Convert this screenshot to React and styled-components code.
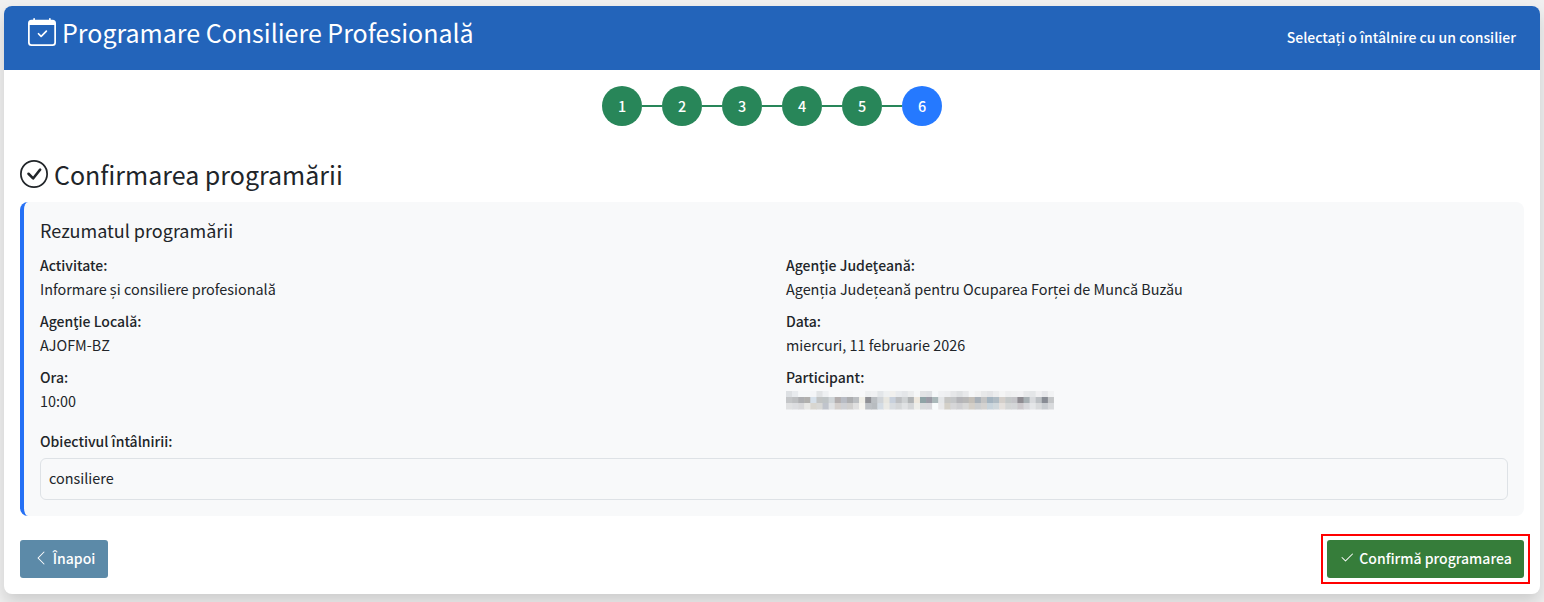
import React from "react";
import styled, { createGlobalStyle } from "styled-components";
import { BsCalendarCheck, BsCheckCircle, BsChevronLeft, BsCheck2 } from "react-icons/bs";

const Global = createGlobalStyle`
  html, body { margin: 0; padding: 0; background: #f0f0f0; }
  body { font-family: "Noto Sans CJK SC", "Noto Sans", sans-serif; font-size: 14.4px; line-height: 24px; color: #212529; }
  * { box-sizing: border-box; }
`;

const Page = styled.div`
  padding: 6px 4px 8px;
  height: 602px;
  overflow: hidden;
`;
const Card = styled.main`
  height: 588px;
  background: #fff;
  border-radius: 8px;
  box-shadow: 0 8px 16px rgba(0, 0, 0, 0.15);
  overflow: hidden;
`;
const Header = styled.header`
  height: 64px;
  background: #2364ba;
  color: #fff;
  display: flex;
  align-items: center;
  justify-content: space-between;
  padding: 0 24px;
`;
const Title = styled.h1`
  margin: 0 0 12px;
  font-size: 25px;
  line-height: 40px;
  font-weight: 400;
  display: flex;
  align-items: center;
  gap: 6px;
`;
const Subtitle = styled.span`
  font-size: 14px;
  font-weight: 500;
  margin-bottom: 3px;
`;
const Body = styled.div`
  padding: 16px;
`;
const Steps = styled.ol`
  list-style: none;
  margin: 0 0 31px;
  padding: 0;
  display: flex;
  justify-content: center;
  align-items: center;
`;
const Step = styled.li`
  width: 40px;
  height: 40px;
  border-radius: 50%;
  background: ${(p) => (p.$active ? "#2579ff" : "#288659")};
  color: #fff;
  font-weight: 500;
  display: flex;
  align-items: center;
  justify-content: center;
`;
const Connector = styled.li`
  width: 20px;
  height: 2px;
  background: #288659;
`;
const Heading = styled.h2`
  margin: 0 0 11px;
  font-size: 25px;
  line-height: 34px;
  font-weight: 400;
  display: flex;
  align-items: center;
  gap: 6px;
`;
const Summary = styled.section`
  background: #f8f9fa;
  border-left: 4px solid #2570f5;
  border-radius: 8px;
  padding: 15px 16px 16px;
  height: 314px;
`;
const SummaryTitle = styled.h3`
  margin: 0 0 10px;
  font-size: 18px;
  line-height: 26px;
  font-weight: 400;
`;
const Grid = styled.div`
  display: grid;
  grid-template-columns: 1fr 1fr;
  column-gap: 24px;
  row-gap: 8px;
`;
const Label = styled.div`
  font-weight: 500;
  font-size: 14px;
`;
const Value = styled.div`
  font-size: 14.4px;
`;
const Objective = styled.div`
  margin-top: 16px;
`;
const Field = styled.div`
  height: 42px;
  margin-top: 5px;
  border: 1px solid #dee2e6;
  border-radius: 6px;
  padding: 7px 8px;
`;
const Actions = styled.div`
  display: flex;
  justify-content: space-between;
  margin-top: 24px;
`;
const Button = styled.button`
  position: relative;
  height: 38px;
  width: ${(p) => p.$w}px;
  padding: 0 0 2px;
  border: 0;
  border-radius: 3px;
  font: 500 14px/24px "Noto Sans CJK SC", "Noto Sans", sans-serif;
  white-space: nowrap;
  color: #fff;
  background: ${(p) => p.$bg};
  display: flex;
  align-items: center;
  justify-content: center;
  gap: 4px;
`;
const Mark = styled.span`
  position: absolute;
  inset: -6px;
  border: 2px solid #f00;
  pointer-events: none;
`;
const Blur = styled.svg`
  display: block;
  margin-top: 2px;
`;

const BG = "f8f9fa";
const ROWS = [
  `dde0e3 e8ebee f6f8f9 f6f8f9 f4f5f7 e1e3e5 eef0f2 ${BG} ${BG} f6f7f8 f6f7f8 ${BG} ${BG} eef0f1 f0f1f3 e3e6e9 eef0f1 f1f0ee e9ebee e4e6e9 ecedee f6f7f8 e2e3e5 dfe1e4 f6f8fa f0f1f3 eeeff1 e6e7e9 dfe1e3 e8e9eb f6f7f8 f2f2f2 e8e9ea e4e5e7 ecedee f4f5f5 eeeff0 f0f1f2 f2f2f4 e8e9eb e4e6e8 f0f0f2 e6e7ea f2f3f4 ${BG}`,
  `c4c6c8 bdbfc1 adaeb1 b1b0ae d6e0ea c2c4c4 bfc4c6 d0d5d8 b3aeae b8bcc4 adaeb0 bcbfc2 f0efe8 8f9095 bbbfc3 d0d4d8 e7e6e0 c8d0dc bdbfc2 cfd2d4 b0b3b5 eee8de 8fa3a6 9a9aa5 aab8ba e4e6e8 c6c6c4 c4c6c8 b4b4b8 b8b8b8 c4bfb8 a8b0b8 c4c4c4 a4b4c0 b0bcc4 d4cfca c4c8c8 c4c4c8 8f8c92 a8b0b4 d8dadd bcc0c4 888c94 c4c6c8 ${BG}`,
  `e0e1e2 dcdde0 d8d8da e8e8e6 d8d6d0 d8d8d6 c0c4cc e0e2e4 d4cfcc ced0d4 d0cfce e0e0e0 f6f5f0 bcc0c4 b8bcc0 d4dce4 eaeae6 d8dce0 d4d6d8 e0e2e4 d4d6d8 eeeeea d8dadc d8d8dc f8fbfc e8e8ea d4d0c8 d6d6d8 cfcfd2 d8d8d8 d4cfc8 ccced0 d4d2d0 c8d4dc d0d8dc e4e0dc d4d6d6 d4d6d8 ccc8cc d8d8dc e4e6e8 d8dadc c8ccd0 d8dadc ${BG}`,
];

const Pixelated = () => (
  <Blur width="268" height="22" viewBox="0 0 268 22">
    {ROWS.map((row, r) =>
      row.split(" ").map((c, i) => (
        <rect key={`${r}-${i}`} x={i * 6.09} y={r * 6} width="6.6" height="6.5" fill={`#${c}`} />
      ))
    )}
  </Blur>
);

const FIELDS = [
  ["Activitate:", "Informare și consiliere profesională"],
  ["Agenţie Judeţeană:", "Agenția Județeană pentru Ocuparea Forței de Muncă Buzău"],
  ["Agenţie Locală:", "AJOFM-BZ"],
  ["Data:", "miercuri, 11 februarie 2026"],
  ["Ora:", "10:00"],
  ["Participant:", <Pixelated />],
];

export default function App() {
  return (
    <Page>
      <Global />
      <Card>
        <Header>
          <Title>
            <BsCalendarCheck size={28} />
            Programare Consiliere Profesională
          </Title>
          <Subtitle>Selectați o întâlnire cu un consilier</Subtitle>
        </Header>
        <Body>
          <Steps>
            {[1, 2, 3, 4, 5, 6].map((n) => (
              <React.Fragment key={n}>
                <Step $active={n === 6}>{n}</Step>
                {n < 6 && <Connector />}
              </React.Fragment>
            ))}
          </Steps>
          <Heading>
            <BsCheckCircle size={28} />
            Confirmarea programării
          </Heading>
          <Summary>
            <SummaryTitle>Rezumatul programării</SummaryTitle>
            <Grid>
              {FIELDS.map(([label, value]) => (
                <div key={label}>
                  <Label>{label}</Label>
                  <Value>{value}</Value>
                </div>
              ))}
            </Grid>
            <Objective>
              <Label>Obiectivul întâlnirii:</Label>
              <Field>consiliere</Field>
            </Objective>
          </Summary>
          <Actions>
            <Button $bg="#5c8aa8" $w={88}>
              <BsChevronLeft size={16} />
              Înapoi
            </Button>
            <Button $bg="#367d3a" $w={197}>
              <BsCheck2 size={16} />
              Confirmă programarea
              <Mark />
            </Button>
          </Actions>
        </Body>
      </Card>
    </Page>
  );
}
